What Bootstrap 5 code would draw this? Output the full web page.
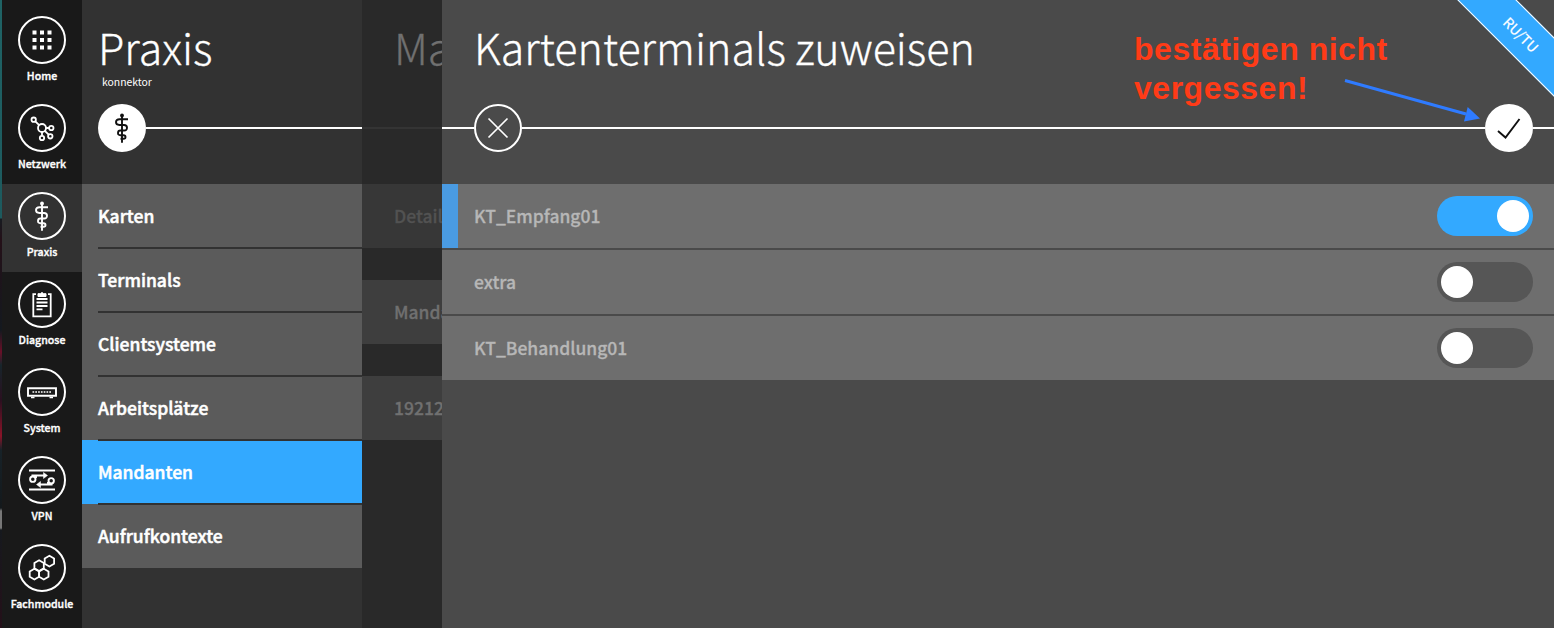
<!DOCTYPE html>
<html lang="de">
<head>
<meta charset="utf-8">
<meta name="viewport" content="width=device-width, initial-scale=1">
<title>Kartenterminals zuweisen</title>
<link href="https://cdn.jsdelivr.net/npm/bootstrap@5.3.0/dist/css/bootstrap.min.css" rel="stylesheet">
<style>
body{font-family:"Noto Sans CJK SC","Open Sans",sans-serif;background:#4a4a4a;color:#fff;overflow:hidden}
.app{height:628px}
.edge{width:2px;background:linear-gradient(#1f6365 0,#1d5a5e 218px,#171b21 219px,#241018 240px,#14191f 330px,#6a1028 352px,#17252b 365px,#2a1020 400px,#8a1428 436px,#172228 450px,#14191c 508px,#777 511px,#777 528px,#16191e 530px,#241019)}
.rail{width:80px;background:#191919;padding-top:8px}
.rail a{height:88px;padding-top:8px;color:#fff;text-decoration:none}
.rail a.on{background:#323232}
.rail span{font-size:10.6px;line-height:14px;font-weight:500;-webkit-text-stroke:.35px #fff;margin-top:5px;white-space:nowrap}
.ring{width:48px;height:48px;border:2px solid #fff;border-radius:50%;flex:none}
.ring svg,.disc svg{display:block}
.disc{width:48px;height:48px;background:#fff;border-radius:50%;flex:none;color:#111}
.sub-col{width:280px;background:#323232}
.head{height:184px;padding-top:21px}
.big{font-size:43px;font-weight:300;line-height:50px;height:54px;white-space:nowrap;margin:0;display:block;-webkit-text-stroke:.3px}
.tiny{font-size:10.4px;line-height:14px;height:29px}
.wire{height:2px;background:#fff}
.entry{height:64px;padding-left:16px;background:#5b5b5b;font-size:17.5px;font-weight:500;-webkit-text-stroke:.5px #fff;color:#fff;text-decoration:none}
.entry+.entry::before{content:"";position:absolute;left:16px;right:0;top:-1px;height:2px;background:#323232;z-index:1}
.entry.on{background:#33a9ff}
.ghost{width:80px;background:#292929;overflow:hidden;color:#707070}
.ghost .big,.ghost .cell{padding-left:32px}
.ghost .cell{height:64px;margin-bottom:32px;background:#3e3e3e;font-size:17.5px;font-weight:500;-webkit-text-stroke:.3px;white-space:nowrap}
.ghost .cell.dim{background:#373737;color:#525252}
.ghost .wire{background:#343434}
.main{background:#4a4a4a}
.term{height:64px;background:#6e6e6e;margin-bottom:2px;padding-right:21px;font-size:17.5px;font-weight:500;-webkit-text-stroke:.3px;color:#b7b7b7}
.term .bar{width:16px;margin-right:16px}
.term.on .bar{background:#4a9be2}
.toggle{width:96px;height:40px;border-radius:20px;background:#565656;padding:4px}
.toggle i{width:32px;height:32px;border-radius:50%;background:#fff}
.term.on .toggle{background:#33a9ff}
.note{left:692px;top:30px;font:bold 32px/39px "Liberation Sans",Arial,sans-serif;letter-spacing:.52px;color:#ff3b17;white-space:nowrap}
.arrow{left:892px;top:70px}
.corner{right:0;top:0;width:110px;height:110px;overflow:hidden}
.ribbon{width:200px;height:42px;line-height:40px;left:-22px;top:14px;padding-right:2px;transform:rotate(45deg);background:#33a9ff;border:1px solid #fff;text-align:center;font-size:14px;-webkit-text-stroke:.2px}
</style>
<script src="https://cdn.jsdelivr.net/npm/bootstrap@5.3.0/dist/js/bootstrap.bundle.min.js"></script>
</head>
<body>
<svg width="0" height="0" class="position-absolute">
<symbol id="staff" viewBox="0 0 44 44"><g fill="none" stroke="currentColor" stroke-width="1.9" stroke-linecap="round" stroke-linejoin="round"><path d="M22 9.5V36"/><path d="M28 13.200H19.500Q16 13.200 16 16.100T19.500 19H24Q27 19 27 21.800T24 24.500H20.500Q18 24.500 18 26.900T20.500 29.200H23.500Q25.500 29.200 25.500 31T23.500 32.800H20.500" stroke-linecap="butt"/></g><circle cx="22" cy="9.500" r="1.900" fill="currentColor"/></symbol>
</svg>
<div class="app d-flex">
  <div class="edge"></div>
  <nav class="rail d-flex flex-column">
    <a href="#" class="d-flex flex-column align-items-center"><div class="ring"><svg width="44" height="44" fill="#fff"><path d="M12.500 12.500h4v4h-4zm7.500 0h4v4h-4zm7.500 0h4v4h-4zM12.500 20h4v4h-4zm7.500 0h4v4h-4zm7.500 0h4v4h-4zM12.500 27.500h4v4h-4zm7.500 0h4v4h-4zm7.500 0h4v4h-4z"/></svg></div><span>Home</span></a>
    <a href="#" class="d-flex flex-column align-items-center"><div class="ring"><svg width="44" height="44" fill="none" stroke="#fff" stroke-width="1.800"><circle cx="22" cy="22" r="4"/><circle cx="13.700" cy="13.700" r="2.200"/><circle cx="31.300" cy="22" r="2.200"/><circle cx="30.300" cy="30.300" r="2.200"/><circle cx="22" cy="32" r="2.200"/><path d="M15.300 15.300l3.900 3.900M26 22h3M24.800 24.800l3.900 3.900M22 26v3.700"/></svg></div><span>Netzwerk</span></a>
    <a href="#" class="on d-flex flex-column align-items-center"><div class="ring"><svg width="44" height="44"><use href="#staff"/></svg></div><span>Praxis</span></a>
    <a href="#" class="d-flex flex-column align-items-center"><div class="ring"><svg width="44" height="44" fill="none" stroke="#fff" stroke-width="1.800"><path d="M16 12.200h-2.700v22.100h17.400V12.200H28M16.500 17h11M16.500 20.500h11M16.500 24h11M16.500 27.300h6"/><path d="M18 14.500v-2.800h2.500a1.600 1.600 0 0 1 3 0H26v2.800z" fill="#fff" stroke-width="1"/></svg></div><span>Diagnose</span></a>
    <a href="#" class="d-flex flex-column align-items-center"><div class="ring"><svg width="44" height="44" fill="none" stroke="#fff" stroke-width="1.900"><path d="M8 18.200h28v7.600H8z"/><path d="M12.500 22h19" stroke-dasharray="1.700 1.100" stroke-width="1.700"/><path d="M11 27.500h3.500M29.500 27.500H33" stroke-width="1.400"/></svg></div><span>System</span></a>
    <a href="#" class="d-flex flex-column align-items-center"><div class="ring"><svg width="44" height="44" fill="none" stroke="#fff" stroke-width="1.900"><path d="M9 12.500h26M9 31.500h26"/><circle cx="12.800" cy="21.200" r="2.700"/><circle cx="31.200" cy="22.800" r="2.700"/><path d="M11.500 17.500H25M32.500 26.500H19M16 20v-2.500M28 24v2.500"/><path d="M23.500 14.500l4 3-4 3zM20.500 23.500l-4 3 4 3z" fill="#fff" stroke-width=".5"/></svg></div><span>VPN</span></a>
    <a href="#" class="d-flex flex-column align-items-center"><div class="ring"><svg width="44" height="44" fill="none" stroke="#fff" stroke-width="1.800"><path id="hex" d="M14.400 22.700l4.700 2.700v5.400l-4.700 2.700-4.700-2.700v-5.400z"/><use href="#hex" x="9.400"/><use href="#hex" x="4.700" y="-8.500"/><use href="#hex" x="15" y="-13"/></svg></div><span>Fachmodule</span></a>
  </nav>
  <section class="sub-col">
    <div class="head">
      <h1 class="big ps-3">Praxis</h1>
      <div class="tiny ps-3 ms-1">konnektor</div>
      <div class="d-flex align-items-center ps-3"><div class="disc d-flex align-items-center justify-content-center"><svg width="44" height="44"><use href="#staff"/></svg></div><div class="wire flex-grow-1"></div></div>
    </div>
    <a class="entry position-relative d-flex align-items-center" href="#">Karten</a>
    <a class="entry position-relative d-flex align-items-center" href="#">Terminals</a>
    <a class="entry position-relative d-flex align-items-center" href="#">Clientsysteme</a>
    <a class="entry position-relative d-flex align-items-center" href="#">Arbeitsplätze</a>
    <a class="entry on position-relative d-flex align-items-center" href="#">Mandanten</a>
    <a class="entry position-relative d-flex align-items-center" href="#">Aufrufkontexte</a>
  </section>
  <section class="ghost">
    <div class="head"><div class="big">Ma</div><div class="d-flex align-items-center" style="height:48px;margin-top:29px"><div class="wire w-100"></div></div></div>
    <div class="cell dim d-flex align-items-center">Details</div>
    <div class="cell d-flex align-items-center">Mandant</div>
    <div class="cell d-flex align-items-center">19212</div>
  </section>
  <main class="main flex-grow-1 position-relative">
    <div class="head">
      <h2 class="big" style="padding-left:32px">Kartenterminals zuweisen</h2>
      <div class="d-flex align-items-center" style="margin-top:29px">
        <div class="wire" style="width:32px"></div>
        <div class="ring"><svg width="44" height="44" fill="none" stroke="#fff" stroke-width="1.700"><path d="M12.500 12.500l19 19m0-19l-19 19"/></svg></div>
        <div class="wire flex-grow-1"></div>
        <div class="disc"><svg width="48" height="48" fill="none" stroke="#111" stroke-width="1.900"><path d="M13 27l7.500 6.500L34.500 15"/></svg></div>
        <div class="wire" style="width:21px"></div>
      </div>
    </div>
    <div class="term on d-flex align-items-center"><div class="bar h-100"></div><span class="flex-grow-1">KT_Empfang01</span><div class="toggle d-flex justify-content-end"><i></i></div></div>
    <div class="term d-flex align-items-center"><div class="bar h-100"></div><span class="flex-grow-1">extra</span><div class="toggle d-flex"><i></i></div></div>
    <div class="term d-flex align-items-center"><div class="bar h-100"></div><span class="flex-grow-1">KT_Behandlung01</span><div class="toggle d-flex"><i></i></div></div>
    <div class="corner position-absolute"><div class="ribbon position-absolute">RU/TU</div></div>
    <div class="note position-absolute">bestätigen nicht<br>vergessen!</div>
    <svg class="arrow position-absolute" width="150" height="60"><path d="M11 10.500L132 44" stroke="#2f7bff" stroke-width="3" fill="none"/><path d="M146 48.500l-16 3 3.700-14.500z" fill="#2f7bff"/></svg>
  </main>
</div>
</body>
</html>
